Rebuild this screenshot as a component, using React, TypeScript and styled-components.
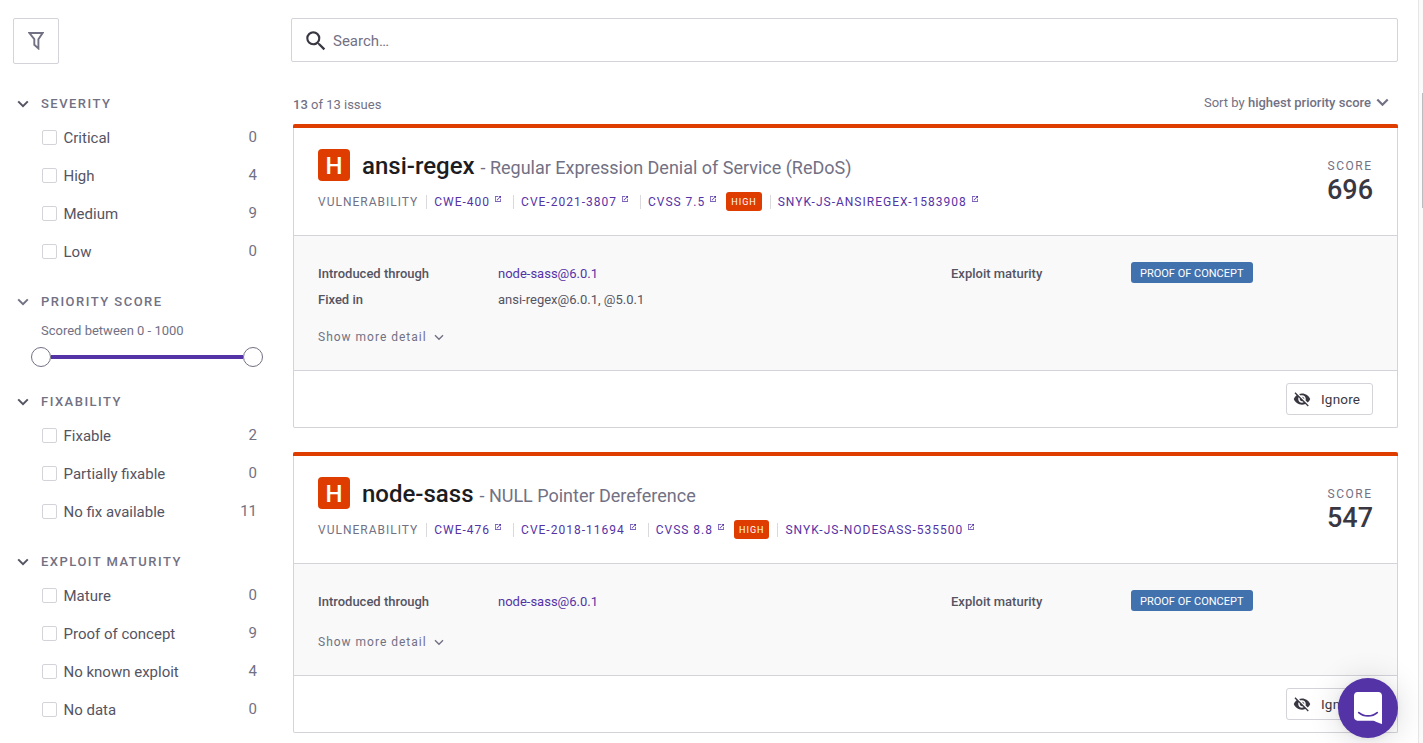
import React from "react";
import styled, { createGlobalStyle } from "styled-components";
import { MdSearch, MdOpenInNew, MdVisibilityOff } from "react-icons/md";

const GlobalStyle = createGlobalStyle`
  *, *::before, *::after { box-sizing: border-box; }
  html, body { margin: 0; padding: 0; background: #fff; }
  body {
    font-family: Roboto, "Open Sans", sans-serif;
    font-size: 13px;
    color: #555463;
    overflow: hidden;
  }
  svg { display: block; flex-shrink: 0; }
`;

const Page = styled.div`
  position: relative;
  display: flex;
  width: 100%;
  height: 743px;
  overflow: hidden;
`;

const Sidebar = styled.aside`
  width: 291px;
  padding: 18px 28px 0 13px;
  flex-shrink: 0;
`;

const FilterButton = styled.button`
  display: flex;
  align-items: center;
  justify-content: center;
  width: 46px;
  height: 46px;
  padding: 0;
  margin-bottom: 28px;
  background: #fff;
  border: 1px solid #d3d3d9;
  border-radius: 2px;
`;

const Group = styled.section`
  margin-bottom: 19px;
`;

const GroupTitle = styled.h3`
  display: flex;
  align-items: center;
  gap: 12px;
  height: 24px;
  margin: 0;
  padding-left: 4px;
  font-size: 13px;
  font-weight: 500;
  letter-spacing: 1.48px;
  color: #727184;
  white-space: nowrap;
  span { margin-top: -2px; }
`;

const Options = styled.div`
  padding-top: 3px;
`;

const Option = styled.label`
  display: flex;
  align-items: center;
  height: 38px;
  padding: 0 6px 1px 29px;
  font-size: 15px;
`;

const Checkbox = styled.span`
  width: 15px;
  height: 15px;
  margin-right: 6.5px;
  border: 1px solid #d3d3d9;
  border-radius: 2px;
`;

const OptionCount = styled.span`
  margin: -1px 0 0 auto;
  color: #727184;
`;

const ScoreFilter = styled.div`
  height: 57px;
  padding: 9px 6px 0 18px;
`;

const ScoreLabel = styled.div`
  padding-left: 10px;
  line-height: 16px;
  color: #727184;
`;

const Slider = styled.div`
  display: flex;
  align-items: center;
  width: 232px;
  height: 20px;
  margin-top: 8px;
`;

const Thumb = styled.span`
  width: 20px;
  height: 20px;
  border: 1px solid #727184;
  border-radius: 50%;
  background: #fff;
`;

const Track = styled.span`
  flex: 1;
  height: 4px;
  background: #5433a6;
`;

const Main = styled.main`
  flex: 1;
  min-width: 0;
  padding: 18px 20px 0 0;
`;

const SearchBox = styled.div`
  display: flex;
  align-items: center;
  gap: 4px;
  height: 44px;
  padding: 1px 0 0 11px;
  border: 1px solid #d3d3d9;
  border-radius: 2px;
  font-size: 15px;
  color: #727184;
`;

const ListHeader = styled.div`
  display: flex;
  align-items: flex-end;
  justify-content: space-between;
  height: 62px;
  padding: 0 9px 11px 2px;
  line-height: 16px;
  color: #727184;
  b { font-weight: 500; }
`;

const Sort = styled.div`
  display: flex;
  align-items: center;
  gap: 5px;
  padding-bottom: 2px;
`;

const IssueList = styled.div`
  display: flex;
  flex-direction: column;
  gap: 24px;
  padding-left: 2px;
`;

const Card = styled.article`
  border: 1px solid #d3d3d9;
  border-top: 0;
  border-radius: 2px;
  &::before {
    content: "";
    display: block;
    height: 4px;
    margin: 0 -1px;
    border-radius: 2px 2px 0 0;
    background: #df3c00;
  }
`;

const CardHeader = styled.header`
  display: flex;
  justify-content: space-between;
  height: 108px;
  padding: 21px 24px 0;
  border-bottom: 1px solid #d3d3d9;
`;

const TitleRow = styled.div`
  display: flex;
  align-items: center;
  height: 32px;
`;

const SeverityMark = styled.span`
  display: flex;
  align-items: center;
  justify-content: center;
  width: 32px;
  height: 32px;
  padding-top: 2px;
  margin-right: 12px;
  border-radius: 4px;
  background: #df3c00;
  color: #fff;
  font-size: 24px;
  font-weight: 500;
`;

const Title = styled.h2`
  margin: 4px 0 0;
  font-size: 24px;
  line-height: 32px;
  font-weight: 500;
  color: #1c1c21;
  span {
    font-size: 18px;
    font-weight: 400;
    letter-spacing: -0.01px;
    color: #727184;
  }
`;

const MetaRow = styled.div`
  display: flex;
  align-items: center;
  height: 20px;
  margin-top: 11px;
  font-size: 12px;
  letter-spacing: 1px;
  color: #727184;
`;

const MetaItem = styled.span`
  display: flex;
  align-items: center;
  height: 14px;
  & + & {
    margin-left: 8px;
    padding-left: 7px;
    border-left: 1px solid #d9d9de;
  }
`;

const MetaLink = styled.a`
  display: flex;
  align-items: center;
  color: #5433a6;
  svg { margin: -7px 3px 0 4px; }
`;

const SeverityTag = styled.span`
  height: 19px;
  margin: -1px 0 0 6px;
  padding: 0 5px;
  border-radius: 3px;
  background: #df3c00;
  color: #fff;
  font-size: 9px;
  line-height: 20px;
  letter-spacing: 1px;
`;

const Score = styled.div`
  padding-top: 9px;
  text-align: right;
`;

const ScoreCaption = styled.div`
  margin-right: 0.5px;
  font-size: 12px;
  line-height: 16px;
  letter-spacing: 1.5px;
  color: #727184;
`;

const ScoreValue = styled.div`
  font-size: 27px;
  line-height: 32px;
  font-weight: 500;
  color: #393842;
`;

const CardBody = styled.div<{ $height: number }>`
  display: flex;
  flex-direction: column;
  justify-content: space-between;
  height: ${(p) => p.$height}px;
  padding: 24px 24px 23px;
  border-bottom: 1px solid #d3d3d9;
  background: #f9f9f9;
`;

const Facts = styled.div`
  display: grid;
  grid-template-columns: 633px 1fr;
`;

const Fact = styled.div`
  display: grid;
  grid-template-columns: 180px 1fr;
  align-items: center;
  height: 26px;
  b { font-weight: 500; }
  a { color: #5433a6; }
`;

const MaturityTag = styled.span`
  justify-self: start;
  height: 21px;
  margin-top: -2px;
  padding: 0 9px;
  border-radius: 3px;
  background: #4272ae;
  color: #fff;
  font-size: 11px;
  line-height: 23px;
`;

const MoreButton = styled.div`
  display: flex;
  align-items: center;
  gap: 7px;
  height: 20px;
  font-size: 12px;
  letter-spacing: 1px;
  color: #727184;
`;

const CardFooter = styled.footer`
  display: flex;
  justify-content: flex-end;
  height: 56px;
  padding: 12px 24px 0;
`;

const IgnoreButton = styled.button`
  display: flex;
  align-items: center;
  gap: 10px;
  width: 87px;
  height: 32px;
  padding: 0 0 0 6px;
  border: 1px solid #d3d3d9;
  border-radius: 3px;
  background: #fff;
  color: #393842;
  font: 400 13.5px Roboto, sans-serif;
  letter-spacing: 0.2px;
`;

const ScrollGutter = styled.div`
  display: flex;
  justify-content: flex-end;
  width: 5px;
  padding-top: 93px;
  border-left: 1px solid #e6e6e8;
  background: #fafafa;
`;

const ScrollThumb = styled.div`
  width: 1px;
  height: 115px;
  background: #bdbdbf;
`;

const ChatLauncher = styled.button`
  position: absolute;
  right: 25px;
  bottom: 5px;
  display: flex;
  align-items: center;
  justify-content: center;
  width: 60px;
  height: 60px;
  padding: 0;
  border: 0;
  border-radius: 50%;
  background: #5433a6;
  box-shadow: 0 1px 6px rgba(0, 0, 0, 0.06), 0 2px 32px rgba(0, 0, 0, 0.16);
`;

type ChevronProps = { width: number; stroke: number; color?: string };

const Chevron = ({ width, stroke, color = "currentColor" }: ChevronProps) => (
  <svg width={width} height={width * 0.7} viewBox="0 0 12 8.4" fill="none">
    <path d="M1.2 1.4 6 6.2l4.8-4.8" stroke={color} strokeWidth={(stroke * 12) / width} />
  </svg>
);

const FilterIcon = () => (
  <svg width="16" height="18" viewBox="0 0 16 18" fill="none" stroke="#727184" strokeWidth="1.9">
    <path d="M1.4 1h13.2L10.4 7.2v9.2L6.3 12.8V7.2z" />
  </svg>
);

const ChatIcon = () => (
  <svg width="28" height="32" viewBox="0 0 28 32">
    <path
      fill="#fff"
      d="M28 32s-4.714-1.855-8.527-3.34H3.437C1.54 28.66 0 27.026 0 25.013V3.644C0 1.633 1.54 0 3.437 0h21.125c1.898 0 3.437 1.632 3.437 3.645v18.404H28V32z"
    />
    <path d="M4.8 20.6c5 4.4 13.4 4.4 18.4 0" fill="none" stroke="#5433a6" strokeWidth="1.8" strokeLinecap="round" />
  </svg>
);

type OptionData = [label: string, count: number];

const severity: OptionData[] = [["Critical", 0], ["High", 4], ["Medium", 9], ["Low", 0]];
const fixability: OptionData[] = [["Fixable", 2], ["Partially fixable", 0], ["No fix available", 11]];
const maturity: OptionData[] = [["Mature", 0], ["Proof of concept", 9], ["No known exploit", 4], ["No data", 0]];

type FilterGroupProps = { title: string; options?: OptionData[]; muted?: boolean; children?: React.ReactNode };

const FilterGroup = ({ title, options, muted, children }: FilterGroupProps) => (
  <Group>
    <GroupTitle>
      <Chevron width={12} stroke={2} color={muted ? "#727184" : "#555463"} />
      <span>{title}</span>
    </GroupTitle>
    {options && (
      <Options>
        {options.map(([label, count]) => (
          <Option key={label}>
            <Checkbox />
            {label}
            <OptionCount>{count}</OptionCount>
          </Option>
        ))}
      </Options>
    )}
    {children}
  </Group>
);

type Issue = {
  name: string;
  problem: string;
  cwe: string;
  cve: string;
  cvss: string;
  id: string;
  score: number;
  fixedIn?: string;
  bodyHeight: number;
};

const issues: Issue[] = [
  {
    name: "ansi-regex",
    problem: "Regular Expression Denial of Service (ReDoS)",
    cwe: "CWE-400",
    cve: "CVE-2021-3807",
    cvss: "CVSS 7.5",
    id: "SNYK-JS-ANSIREGEX-1583908",
    score: 696,
    fixedIn: "ansi-regex@6.0.1, @5.0.1",
    bodyHeight: 135,
  },
  {
    name: "node-sass",
    problem: "NULL Pointer Dereference",
    cwe: "CWE-476",
    cve: "CVE-2018-11694",
    cvss: "CVSS 8.8",
    id: "SNYK-JS-NODESASS-535500",
    score: 547,
    bodyHeight: 112,
  },
];

const ExternalLink = ({ children }: { children: string }) => (
  <MetaLink>
    {children}
    <MdOpenInNew size={8} />
  </MetaLink>
);

const IssueCard = ({ issue }: { issue: Issue }) => (
  <Card>
    <CardHeader>
      <div>
        <TitleRow>
          <SeverityMark>H</SeverityMark>
          <Title>
            {issue.name} <span>- {issue.problem}</span>
          </Title>
        </TitleRow>
        <MetaRow>
          <MetaItem>VULNERABILITY</MetaItem>
          <MetaItem><ExternalLink>{issue.cwe}</ExternalLink></MetaItem>
          <MetaItem><ExternalLink>{issue.cve}</ExternalLink></MetaItem>
          <MetaItem>
            <ExternalLink>{issue.cvss}</ExternalLink>
            <SeverityTag>HIGH</SeverityTag>
          </MetaItem>
          <MetaItem><ExternalLink>{issue.id}</ExternalLink></MetaItem>
        </MetaRow>
      </div>
      <Score>
        <ScoreCaption>SCORE</ScoreCaption>
        <ScoreValue>{issue.score}</ScoreValue>
      </Score>
    </CardHeader>
    <CardBody $height={issue.bodyHeight}>
      <Facts>
        <div>
          <Fact><b>Introduced through</b><a>node-sass@6.0.1</a></Fact>
          {issue.fixedIn && <Fact><b>Fixed in</b><span>{issue.fixedIn}</span></Fact>}
        </div>
        <Fact><b>Exploit maturity</b><MaturityTag>PROOF OF CONCEPT</MaturityTag></Fact>
      </Facts>
      <MoreButton>
        Show more detail
        <Chevron width={10} stroke={1.4} />
      </MoreButton>
    </CardBody>
    <CardFooter>
      <IgnoreButton>
        <MdVisibilityOff size={18} />
        Ignore
      </IgnoreButton>
    </CardFooter>
  </Card>
);

export default function App() {
  return (
    <>
      <GlobalStyle />
      <Page>
        <Sidebar>
          <FilterButton><FilterIcon /></FilterButton>
          <FilterGroup title="SEVERITY" options={severity} />
          <FilterGroup title="PRIORITY SCORE" muted>
            <ScoreFilter>
              <ScoreLabel>Scored between 0 - 1000</ScoreLabel>
              <Slider><Thumb /><Track /><Thumb /></Slider>
            </ScoreFilter>
          </FilterGroup>
          <FilterGroup title="FIXABILITY" options={fixability} />
          <FilterGroup title="EXPLOIT MATURITY" options={maturity} />
        </Sidebar>
        <Main>
          <SearchBox>
            <MdSearch size={26} color="#393842" />
            Search…
          </SearchBox>
          <ListHeader>
            <div><b>13</b> of 13 issues</div>
            <Sort>
              <span>Sort by <b>highest priority score</b></span>
              <Chevron width={13} stroke={2.2} />
            </Sort>
          </ListHeader>
          <IssueList>
            {issues.map((issue) => <IssueCard key={issue.name} issue={issue} />)}
          </IssueList>
        </Main>
        <ScrollGutter><ScrollThumb /></ScrollGutter>
        <ChatLauncher><ChatIcon /></ChatLauncher>
      </Page>
    </>
  );
}
